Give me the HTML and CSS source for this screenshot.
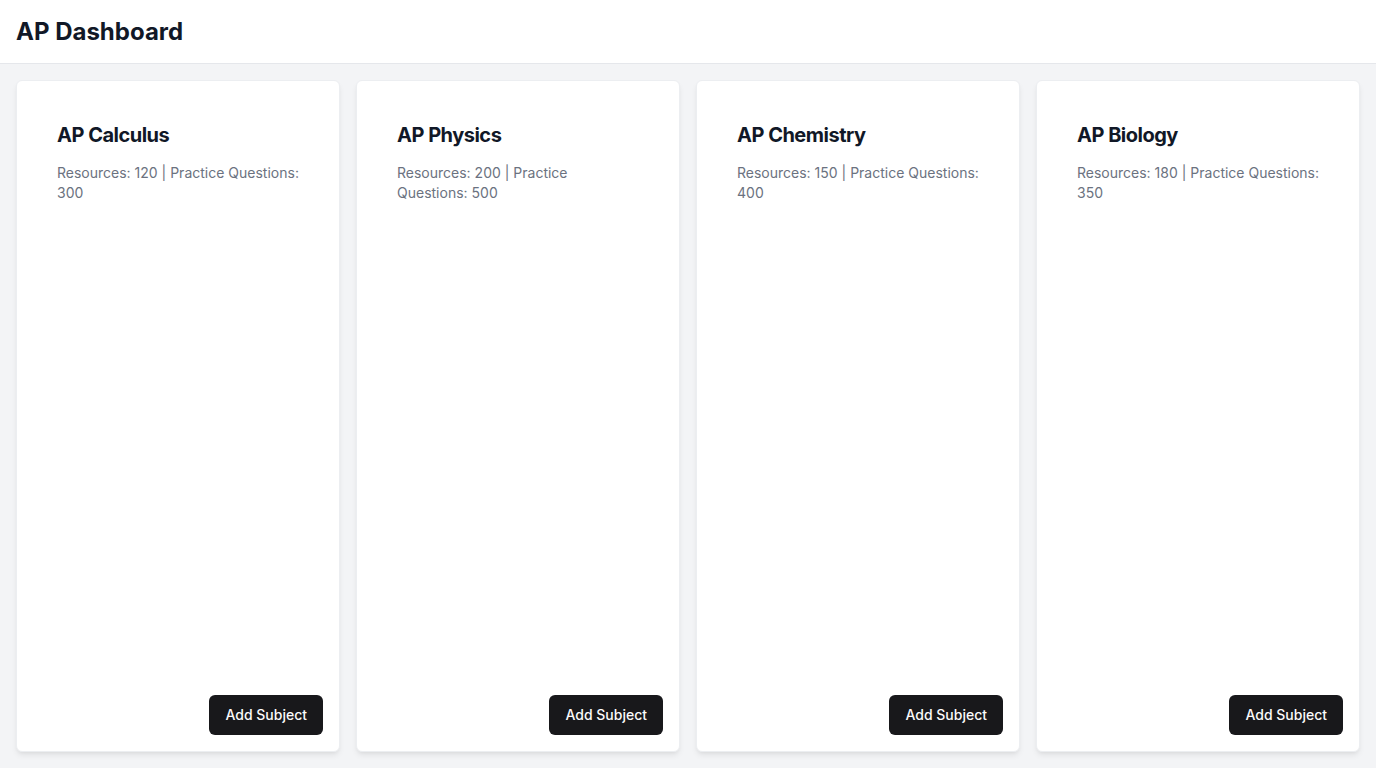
FILE: index.html
```html
<!DOCTYPE html>
<html lang="en">
<head>
<meta charset="utf-8">
<title>AP Dashboard</title>
<link rel="stylesheet" href="styles.css">
</head>
<body>
<header class="topbar">
  <h1 class="title">AP Dashboard</h1>
</header>
<main class="grid">
  <section class="card">
    <div class="card-body">
      <h2 class="card-title">AP Calculus</h2>
      <p class="card-desc">Resources: 120 | Practice Questions: 300</p>
    </div>
    <div class="card-footer"><button class="btn">Add Subject</button></div>
  </section>
  <section class="card">
    <div class="card-body">
      <h2 class="card-title">AP Physics</h2>
      <p class="card-desc">Resources: 200 | Practice Questions: 500</p>
    </div>
    <div class="card-footer"><button class="btn">Add Subject</button></div>
  </section>
  <section class="card">
    <div class="card-body">
      <h2 class="card-title">AP Chemistry</h2>
      <p class="card-desc">Resources: 150 | Practice Questions: 400</p>
    </div>
    <div class="card-footer"><button class="btn">Add Subject</button></div>
  </section>
  <section class="card">
    <div class="card-body">
      <h2 class="card-title">AP Biology</h2>
      <p class="card-desc">Resources: 180 | Practice Questions: 350</p>
    </div>
    <div class="card-footer"><button class="btn">Add Subject</button></div>
  </section>
</main>
</body>
</html>
```
FILE: styles.css
```css
* { box-sizing: border-box; }
html, body { height: 100%; }
body {
  margin: 0;
  font-family: Inter, "Noto Sans", sans-serif;
  background: #f3f4f6;
  color: #111827;
  display: flex;
  flex-direction: column;
}
.topbar {
  height: 64px;
  background: #ffffff;
  border-bottom: 1px solid #e5e7eb;
  display: flex;
  align-items: center;
  padding: 0 16px;
  flex-shrink: 0;
}
.title {
  margin: 0;
  font-size: 24px;
  font-weight: 700;
  line-height: 32px;
  color: #111827;
}
.grid {
  flex: 1;
  display: grid;
  grid-template-columns: repeat(4, 1fr);
  gap: 16px;
  padding: 16px;
  min-height: 0;
}
.card {
  background: #ffffff;
  border: 1px solid #eceef1;
  border-radius: 6px;
  box-shadow: 0 4px 6px -1px rgba(0,0,0,0.08), 0 2px 4px -2px rgba(0,0,0,0.06);
  display: flex;
  flex-direction: column;
  justify-content: space-between;
}
.card-body {
  padding: 40px 38px 0 40px;
}
.card-title {
  margin: 0 0 14px 0;
  font-size: 20px;
  font-weight: 700;
  line-height: 28px;
  letter-spacing: -0.5px;
  color: #111827;
}
.card-desc {
  margin: 0;
  font-size: 14px;
  line-height: 20px;
  color: #6b7280;
}
.card-footer {
  display: flex;
  justify-content: flex-end;
  padding: 16px;
}
.btn {
  height: 40px;
  padding: 0 16px 1px;
  border: none;
  border-radius: 6px;
  background: #18181b;
  color: #fafafa;
  font-family: Inter, "Noto Sans", sans-serif;
  font-size: 14px;
  font-weight: 500;
}
```
